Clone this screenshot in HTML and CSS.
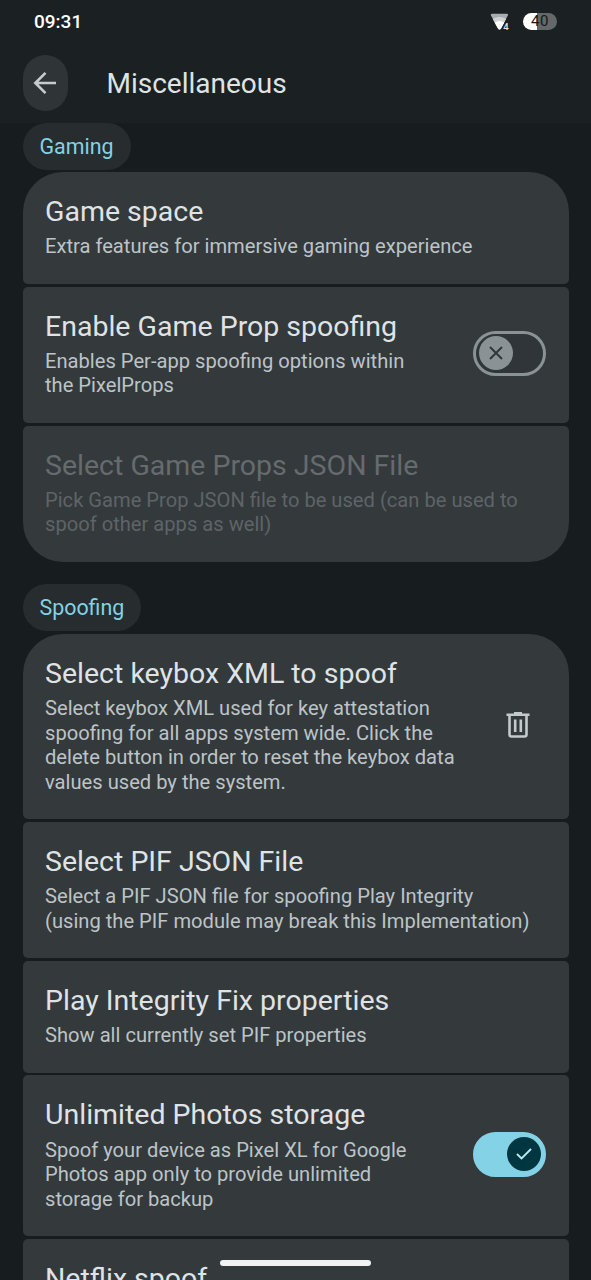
FILE: index.html
```html
<!DOCTYPE html>
<html lang="en">
<head>
    <meta charset="UTF-8">
    <meta name="viewport" content="width=device-width, initial-scale=1.0">
    <title>Miscellaneous</title>
    <link rel="stylesheet" href="styles.css">
</head>
<body>
    <header>
        <div class="status-bar">
            <span class="clock">09:31</span>
            <div class="status-icons">
                <svg class="wifi" width="20" height="18" viewBox="0 0 20 18">
                    <path d="M2.2 0.8h14.6q2 0 1 1.800L11 15.500q-1.500 2-3 0L1 2.600Q0 0.800 2.200 0.800z" fill="#a9adaf"/>
                    <path d="M2.800 6q6.700-4 13.400 0L11 15.500q-1.500 2-3 0z" fill="#cfd2d3"/>
                    <path d="M4.700 9.500q4.800-3 9.600 0L11 15.500q-1.500 2-3 0z" fill="#fff"/>
                    <path d="M15.800 7L11 17.500h9V7z" fill="#1b2023"/>
                    <text x="13.300" y="17.300" font-size="9.500" font-weight="500" fill="#e3e6e7">4</text>
                </svg>
                <div class="battery">40</div>
            </div>
        </div>
        <div class="toolbar">
            <button class="back">
                <svg width="24" height="24" viewBox="0 0 24 24" fill="none" stroke="#c6cbcd" stroke-width="2.600">
                    <path d="M23 12H2.500M12.500 1.800L2.300 12l10.200 10.200"/>
                </svg>
            </button>
            <h1>Miscellaneous</h1>
        </div>
    </header>

    <main>
        <h2 class="chip">Gaming</h2>
        <section class="group">
            <div class="card">
                <div class="text">
                    <h3>Game space</h3>
                    <p>Extra features for immersive gaming experience</p>
                </div>
            </div>
            <div class="card">
                <div class="text">
                    <h3>Enable Game Prop spoofing</h3>
                    <p>Enables Per-app spoofing options within<br>the PixelProps</p>
                </div>
                <div class="switch">
                    <span class="thumb">
                        <svg width="14" height="14" viewBox="0 0 14 14" fill="none" stroke="#2f3538" stroke-width="1.900">
                            <path d="M1 1l12 12M13 1L1 13"/>
                        </svg>
                    </span>
                </div>
            </div>
            <div class="card disabled">
                <div class="text">
                    <h3>Select Game Props JSON File</h3>
                    <p>Pick Game Prop JSON file to be used (can be used to<br>spoof other apps as well)</p>
                </div>
            </div>
        </section>

        <h2 class="chip">Spoofing</h2>
        <section class="group">
            <div class="card">
                <div class="text">
                    <h3>Select keybox XML to spoof</h3>
                    <p>Select keybox XML used for key attestation<br>spoofing for all apps system wide. Click the<br>delete button in order to reset the keybox data<br>values used by the system.</p>
                </div>
                <svg class="trash" width="24" height="26" viewBox="0 0 24 26" fill="none" stroke="#c3cacc" stroke-width="2.600">
                    <path d="M0.500 2.700h23M8 1.300h8M3.500 2.500v20q0 2 2 2h13q2 0 2-2v-20M9.200 7.500v12.500M14.800 7.500v12.500"/>
                </svg>
            </div>
            <div class="card">
                <div class="text">
                    <h3>Select PIF JSON File</h3>
                    <p>Select a PIF JSON file for spoofing Play Integrity<br>(using the PIF module may break this Implementation)</p>
                </div>
            </div>
            <div class="card">
                <div class="text">
                    <h3>Play Integrity Fix properties</h3>
                    <p>Show all currently set PIF properties</p>
                </div>
            </div>
            <div class="card">
                <div class="text">
                    <h3>Unlimited Photos storage</h3>
                    <p>Spoof your device as Pixel XL for Google<br>Photos app only to provide unlimited<br>storage for backup</p>
                </div>
                <div class="switch on">
                    <span class="thumb">
                        <svg width="16" height="12" viewBox="0 0 16 12" fill="none" stroke="#b9ebf7" stroke-width="1.800">
                            <path d="M1 6l4.500 4.500L15 1"/>
                        </svg>
                    </span>
                </div>
            </div>
            <div class="card">
                <div class="text">
                    <h3>Netflix spoof</h3>
                </div>
            </div>
        </section>
    </main>
    <div class="nav-handle"></div>
</body>
</html>
```

FILE: styles.css
```css
* {
    box-sizing: border-box;
}
body {
    margin: 0;
    height: 1280px;
    overflow: hidden;
    font-family: Roboto, sans-serif;
    background-color: #171c1f;
    color: #dfe3e5;
}
h1, h2, h3, p {
    margin: 0;
    font-weight: 400;
    white-space: nowrap;
}
header {
    height: 122.5px;
    background-color: #1b2023;
}
.status-bar {
    display: flex;
    justify-content: space-between;
    align-items: center;
    height: 43px;
    padding: 0 34px;
}
.clock {
    font-size: 19px;
    font-weight: 500;
    color: #fff;
}
.status-icons {
    display: flex;
    align-items: center;
    gap: 13px;
}
.battery {
    width: 34px;
    height: 17px;
    border-radius: 9px;
    background: linear-gradient(to right, #fff 41%, #63686a 41%);
    color: #14181a;
    font-size: 15px;
    line-height: 17.5px;
    letter-spacing: 0.5px;
    text-align: center;
}
.toolbar {
    display: flex;
    align-items: center;
    gap: 39px;
    padding: 12px 22.5px 0;
}
.back {
    display: flex;
    align-items: center;
    justify-content: center;
    width: 45px;
    height: 56px;
    padding: 0;
    border: none;
    border-radius: 23px;
    background-color: #2f3437;
}
h1 {
    font-size: 28px;
}
main {
    padding: 0 22.5px;
}
.chip {
    width: fit-content;
    height: 47px;
    padding: 0 17px;
    border-radius: 24px;
    background-color: #272c2f;
    color: #84d2e3;
    font-size: 21.4px;
    line-height: 47px;
}
.group {
    display: flex;
    flex-direction: column;
    gap: 2.7px;
    margin: 2.7px 0 22.3px;
}
.card {
    display: flex;
    align-items: center;
    justify-content: space-between;
    padding: 22px 22.5px 24.8px;
    border-radius: 5px;
    background-color: #34393c;
}
.card:first-child {
    border-top-left-radius: 40px;
    border-top-right-radius: 40px;
}
.group:first-of-type .card:last-child {
    border-bottom-left-radius: 40px;
    border-bottom-right-radius: 40px;
}
.card h3 {
    font-size: 28.5px;
    line-height: 36px;
}
.card p {
    margin-top: 4.3px;
    font-size: 20.15px;
    line-height: 24.6px;
    color: #bcc4c7;
}
.card.disabled h3 {
    color: #656b6e;
}
.card.disabled p {
    color: #5e6467;
}
.switch {
    display: flex;
    align-items: center;
    width: 73px;
    height: 45px;
    padding: 0 2.5px;
    border: 3px solid #8a9295;
    border-radius: 23px;
    background-color: #2f3538;
}
.thumb {
    display: flex;
    align-items: center;
    justify-content: center;
    width: 34px;
    height: 34px;
    border-radius: 50%;
    background-color: #8a9295;
}
.switch.on {
    justify-content: flex-end;
    border-color: #84d2e6;
    background-color: #84d2e6;
}
.switch.on .thumb {
    background-color: #003640;
}
.trash {
    margin-right: 16.5px;
}
.nav-handle {
    position: absolute;
    left: 220px;
    top: 1260px;
    width: 151px;
    height: 6px;
    border-radius: 3px;
    background-color: #f0f2f3;
}
```
